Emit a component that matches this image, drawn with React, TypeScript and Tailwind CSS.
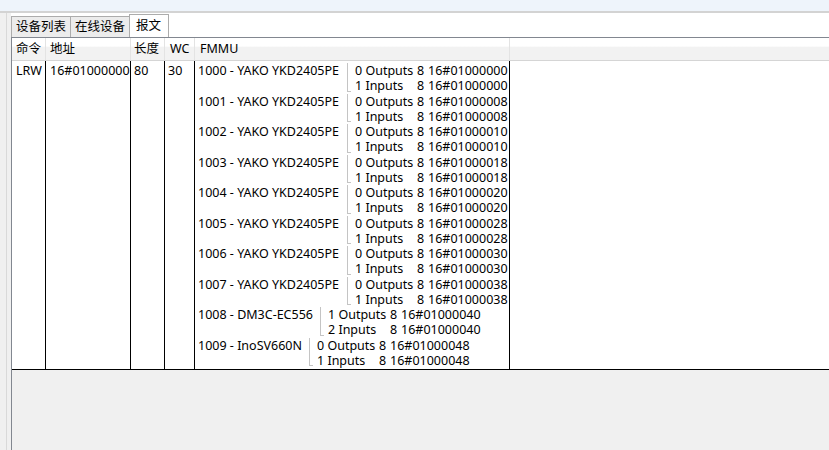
const devices = [
  { name: '1000 - YAKO YKD2405PE', w: 'w-[149px]', rows: [['0 Outputs', '8', '16#01000000'], ['1 Inputs', '8', '16#01000000']] },
  { name: '1001 - YAKO YKD2405PE', w: 'w-[149px]', rows: [['0 Outputs', '8', '16#01000008'], ['1 Inputs', '8', '16#01000008']] },
  { name: '1002 - YAKO YKD2405PE', w: 'w-[149px]', rows: [['0 Outputs', '8', '16#01000010'], ['1 Inputs', '8', '16#01000010']] },
  { name: '1003 - YAKO YKD2405PE', w: 'w-[149px]', rows: [['0 Outputs', '8', '16#01000018'], ['1 Inputs', '8', '16#01000018']] },
  { name: '1004 - YAKO YKD2405PE', w: 'w-[149px]', rows: [['0 Outputs', '8', '16#01000020'], ['1 Inputs', '8', '16#01000020']] },
  { name: '1005 - YAKO YKD2405PE', w: 'w-[149px]', rows: [['0 Outputs', '8', '16#01000028'], ['1 Inputs', '8', '16#01000028']] },
  { name: '1006 - YAKO YKD2405PE', w: 'w-[149px]', rows: [['0 Outputs', '8', '16#01000030'], ['1 Inputs', '8', '16#01000030']] },
  { name: '1007 - YAKO YKD2405PE', w: 'w-[149px]', rows: [['0 Outputs', '8', '16#01000038'], ['1 Inputs', '8', '16#01000038']] },
  { name: '1008 - DM3C-EC556', w: 'w-[122px]', rows: [['1 Outputs', '8', '16#01000040'], ['2 Inputs', '8', '16#01000040']] },
  { name: '1009 - InoSV660N', w: 'w-[111px]', rows: [['0 Outputs', '8', '16#01000048'], ['1 Inputs', '8', '16#01000048']] },
];

function DeviceBlock({ name, w, rows }: { name: string; w: string; rows: string[][] }) {
  return (
    <div className="flex h-[30.5px]">
      <div className={`${w} shrink-0 leading-[15.25px] whitespace-nowrap`}>{name}</div>
      <div className="w-[4px] shrink-0 border-l border-b border-[#c4c4c4] mb-[2px]" />
      <div className="pl-[4px] flex flex-col">
        {rows.map((r, i) => (
          <div key={i} className="flex h-[15.25px] leading-[15.25px] whitespace-nowrap">
            <span className="w-[62px]">{r[0]}</span>
            <span className="w-[11px]">{r[1]}</span>
            <span>{r[2]}</span>
          </div>
        ))}
      </div>
    </div>
  );
}

export default function App() {
  return (
    <div
      className="w-[829px] h-[450px] bg-[#f0f0f0] flex flex-col overflow-hidden text-[12.5px] text-black"
      style={{ fontFamily: '"Noto Sans", "Noto Sans CJK SC", sans-serif' }}
    >
      <div className="h-[11px] shrink-0 bg-[#eef4fb]" />
      <div className="h-[2px] shrink-0 bg-[#d3d3d3]" />
      <div className="flex flex-1 min-h-0">
        <div className="w-[7px] shrink-0 border-r border-[#d9d9d9]" />
        <div className="w-[4px] shrink-0" />
        <div className="flex-1 flex flex-col min-w-0">
          {/* tab strip */}
          <div className="h-[24px] shrink-0 bg-white flex items-end">
            <div className="h-[21px] w-[60px] border border-b-0 border-[#acacac] bg-[#ececec] pl-[4px] leading-[20px] whitespace-nowrap">设备列表</div>
            <div className="h-[21px] w-[59px] border border-l-0 border-b-0 border-[#acacac] bg-[#ececec] pl-[4px] leading-[20px] whitespace-nowrap">在线设备</div>
            <div className="h-[23px] w-[40px] -ml-px border border-b-0 border-[#acacac] bg-white pl-[6px] leading-[21px]">报文</div>
          </div>

          {/* list view */}
          <div className="flex-1 flex flex-col border-t border-l border-[#828790]">
            <div className="h-[23px] shrink-0 flex border-b border-[#d5d5d5] bg-[linear-gradient(to_bottom,#ffffff_0%,#ffffff_38%,#f2f2f2_40%,#f2f2f2_100%)] leading-[22px] whitespace-nowrap">
              <div className="w-[34px] shrink-0 pl-[4px] border-r border-[#e3e3e3]">命令</div>
              <div className="w-[85px] shrink-0 pl-[4px] border-r border-[#e3e3e3]">地址</div>
              <div className="w-[34px] shrink-0 pl-[3px] border-r border-[#e3e3e3]">长度</div>
              <div className="w-[30px] shrink-0 pl-[5px] border-r border-[#e3e3e3]">WC</div>
              <div className="w-[315px] shrink-0 pl-[5px] border-r border-[#e3e3e3]">FMMU</div>
              <div className="flex-1" />
            </div>

            <div className="h-[309px] shrink-0 flex bg-white border-b border-black leading-[15.25px] whitespace-nowrap">
              <div className="w-[34px] shrink-0 pl-[4px] pt-[2px] border-r border-black">LRW</div>
              <div className="w-[85px] shrink-0 pl-[4px] pt-[2px] border-r border-black">16#01000000</div>
              <div className="w-[34px] shrink-0 pl-[3px] pt-[2px] border-r border-black">80</div>
              <div className="w-[30px] shrink-0 pl-[3px] pt-[2px] border-r border-black">30</div>
              <div className="w-[315px] shrink-0 pl-[3px] pt-[2px] border-r border-black flex flex-col">
                {devices.map((d) => (
                  <DeviceBlock key={d.name} {...d} />
                ))}
              </div>
              <div className="flex-1" />
            </div>

            <div className="flex-1" />
          </div>
        </div>
      </div>
    </div>
  );
}
